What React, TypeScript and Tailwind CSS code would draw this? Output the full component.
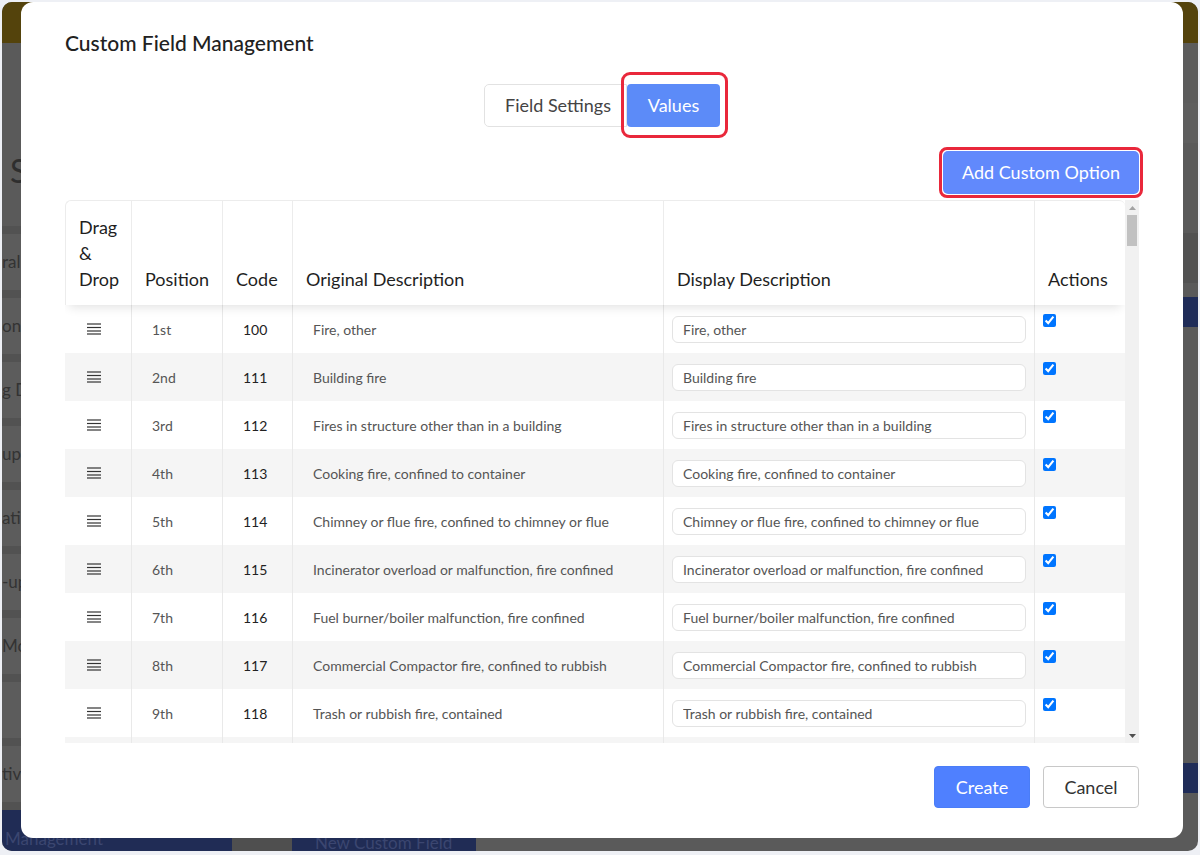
import React from "react";

const rows: [string, string, string][] = [
  ["1st", "100", "Fire, other"],
  ["2nd", "111", "Building fire"],
  ["3rd", "112", "Fires in structure other than in a building"],
  ["4th", "113", "Cooking fire, confined to container"],
  ["5th", "114", "Chimney or flue fire, confined to chimney or flue"],
  ["6th", "115", "Incinerator overload or malfunction, fire confined"],
  ["7th", "116", "Fuel burner/boiler malfunction, fire confined"],
  ["8th", "117", "Commercial Compactor fire, confined to rubbish"],
  ["9th", "118", "Trash or rubbish fire, contained"],
];

const sideItems = ["ral", "ons", "g D", "up", "ati", "-up", "Mo", "", "tiv"];

const DragHandle = () => (
  <svg width="14" height="12" viewBox="0 0 14 12" className="ml-[22px] block">
    <g stroke="#333" strokeWidth="1.2">
      <line x1="0" y1="1" x2="14" y2="1" />
      <line x1="0" y1="4.5" x2="14" y2="4.5" />
      <line x1="0" y1="8" x2="14" y2="8" />
      <line x1="0" y1="11" x2="14" y2="11" />
    </g>
  </svg>
);

// page behind the dimmed overlay
const Backdrop = () => (
  <div className="flex h-full flex-col">
    <div className="h-[41px] bg-[#54430c]" />
    <div className="flex flex-1">
      <aside className="flex w-[230px] flex-col">
        <div className="h-[183px] pt-[112px] pl-[8px] text-[32px] leading-none text-[#2e2e2e]">S</div>
        {sideItems.map((t, i) => (
          <div key={i}>
            <div className="h-[8px] bg-[#525252]" />
            <div className="flex h-[56px] items-center bg-[#5c5c5c] text-[17px] whitespace-nowrap text-[#333]">
              {t}
            </div>
          </div>
        ))}
        <div className="h-[8px] bg-[#525252]" />
        <div className="flex flex-1 items-end bg-[#202c55] pl-[3px] text-[17px] text-[#3b4670]">Management</div>
      </aside>
      <main className="flex flex-1 flex-col">
        <div className="h-[60px] bg-[#5c5c5c]" />
        <div className="h-[40px] bg-[#5e5e5e]" />
        <div className="mt-[90px] h-[50px] bg-[#525252]" />
        <div className="mt-[14px] h-[30px] bg-[#1f2c58]" />
        <div className="flex-1" />
        <div className="h-[30px] bg-[#1f2c58]" />
        <div className="mt-[33px] flex h-[25px] items-end">
          <div className="h-full w-[60px] bg-[#4f4f4f]" />
          <div className="flex h-full w-[184px] items-end bg-[#202c55] pl-[23px] text-[17px] leading-none text-[#3b4670]">
            New Custom Field
          </div>
        </div>
      </main>
    </div>
  </div>
);

const cellBorder = "border-l border-[#e9e9e9]";

export default function App() {
  return (
    <div className="h-[855px] w-[1200px] bg-[#eef0f5] p-[2px] pb-[4px]" style={{ fontFamily: "Lato, 'Noto Sans', sans-serif" }}>
      <div className="relative h-full overflow-hidden rounded-[10px] bg-[#5a5a5a]">
        <Backdrop />

        {/* modal */}
        <div className="absolute top-0 left-[19px] flex h-[836px] w-[1162px] flex-col rounded-[12px] bg-white px-[44px] pt-[27px]">
          <h2 className="text-[21px] leading-[28px] font-medium text-[#212121]">Custom Field Management</h2>

          <div className="mt-[27px] flex justify-center">
            <button className="h-[43px] w-[143px] rounded-l-[5px] border border-[#e2e2e2] bg-white pl-[5px] text-[18px] text-[#444]">
              Field Settings
            </button>
            <div className="relative">
              <div className="absolute -top-[12px] -right-[8px] -bottom-[11px] -left-[6px] rounded-[9px] border-[3px] border-[#e9283b]" />
              <button className="h-[43px] w-[93px] rounded-[4px] bg-[#5c8bf8] text-[18px] text-white">Values</button>
            </div>
          </div>

          <div className="mt-[20px] -mr-[4px] flex justify-end">
            <div className="rounded-[8px] border-[3px] border-[#e9283b] p-[1px]">
              <button className="h-[43px] w-[196px] rounded-[5px] bg-[#6189fc] text-[18px] text-white">
                Add Custom Option
              </button>
            </div>
          </div>

          <div className="mt-[2px] flex h-[543px] overflow-hidden">
            <div className="flex-1 overflow-hidden">
              <table className="w-full table-fixed border-separate border-spacing-0">
                <colgroup>
                  <col className="w-[66px]" />
                  <col className="w-[91px]" />
                  <col className="w-[70px]" />
                  <col className="w-[371px]" />
                  <col className="w-[371px]" />
                  <col />
                </colgroup>
                <thead>
                  <tr className="relative z-10 text-left align-bottom text-[18px] leading-[26px] text-[#1f1f1f] shadow-[0_6px_10px_-4px_rgba(0,0,0,0.12)]">
                    <th className="h-[105px] rounded-tl-[6px] border-t border-l border-[#ececec] px-[13px] pb-[13px] font-normal">Drag & Drop</th>
                    <th className="border-t border-l border-[#ececec] px-[13px] pb-[13px] font-normal">Position</th>
                    <th className="border-t border-l border-[#ececec] px-[13px] pb-[13px] font-normal">Code</th>
                    <th className="border-t border-l border-[#ececec] px-[13px] pb-[13px] font-normal">Original Description</th>
                    <th className="border-t border-l border-[#ececec] px-[13px] pb-[13px] font-normal">Display Description</th>
                    <th className="rounded-tr-[6px] border-t border-l border-[#ececec] px-[13px] pb-[13px] font-normal">Actions</th>
                  </tr>
                </thead>
                <tbody className="text-[14px] text-[#555]">
                  {rows.map(([pos, code, desc], i) => (
                    <tr key={code} className={i % 2 === 1 ? "bg-[#f5f5f5]" : "bg-white"}>
                      <td className="h-[48px]">
                        <DragHandle />
                      </td>
                      <td className={`${cellBorder} pl-[20px]`}>{pos}</td>
                      <td className={`${cellBorder} pl-[20px] text-[#222]`}>{code}</td>
                      <td className={`${cellBorder} pl-[20px]`}>{desc}</td>
                      <td className={`${cellBorder} px-[8px]`}>
                        <input
                          readOnly
                          value={desc}
                          className="h-[27px] w-full rounded-[6px] border border-[#e3e3e3] bg-white px-[10px] text-[14px] text-[#555] outline-none"
                        />
                      </td>
                      <td className={`${cellBorder} pt-[9px] pl-[8px] align-top`}>
                        <input type="checkbox" defaultChecked className="block h-[13px] w-[13px]" />
                      </td>
                    </tr>
                  ))}
                  {/* next row, scrolled below the fold */}
                  <tr className="bg-[#f5f5f5]">
                    <td className="h-[48px]" />
                    <td className={cellBorder} />
                    <td className={cellBorder} />
                    <td className={cellBorder} />
                    <td className={cellBorder} />
                    <td className={cellBorder} />
                  </tr>
                </tbody>
              </table>
            </div>

            {/* scrollbar */}
            <div className="flex w-[14px] flex-col items-center bg-[#f1f1f1]">
              <svg width="7" height="4" viewBox="0 0 7 4" className="mt-[6px]">
                <path d="M3.5 0L7 4H0z" fill="#a3a3a3" />
              </svg>
              <div className="mt-[5px] h-[31px] w-[10px] bg-[#c1c1c1]" />
              <div className="flex-1" />
              <svg width="7" height="4" viewBox="0 0 7 4" className="mb-[5px]">
                <path d="M0 0h7L3.5 4z" fill="#505050" />
              </svg>
            </div>
          </div>

          <div className="mt-[23px] flex justify-end gap-[13px]">
            <button className="h-[42px] w-[96px] rounded-[4px] border border-[#4a7df7] bg-[#4f80ff] text-[18px] text-white">Create</button>
            <button className="h-[42px] w-[96px] rounded-[4px] border border-[#c8c8c8] bg-white text-[18px] text-[#333]">Cancel</button>
          </div>
        </div>
      </div>
    </div>
  );
}
